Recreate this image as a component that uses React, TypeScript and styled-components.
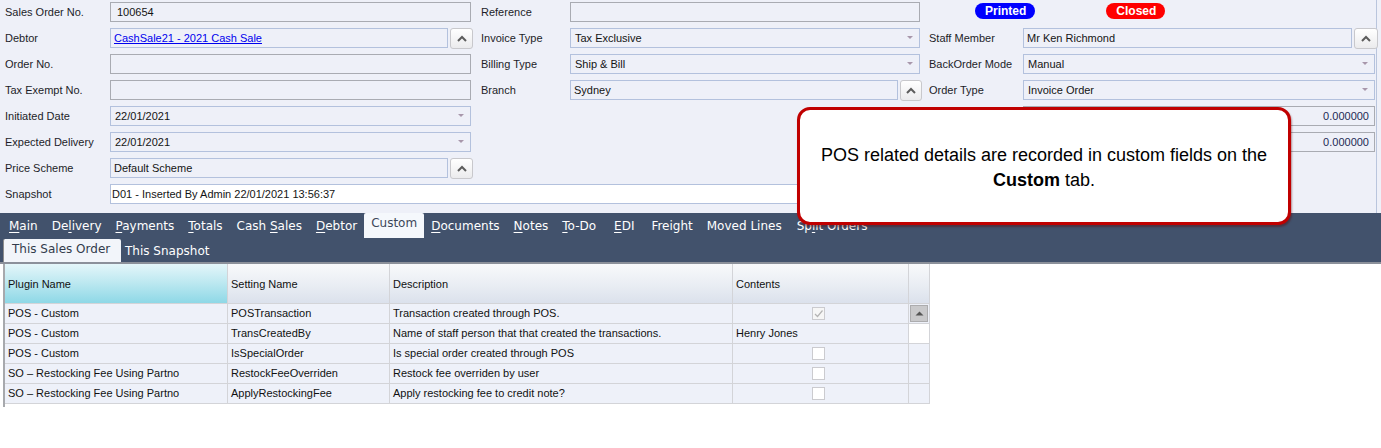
import * as React from "react";
import styled, { createGlobalStyle, css } from "styled-components";

type BoxKind = "plain" | "combo" | "lookup" | "link" | "white" | "number";

type TabDef = { pre: string; key?: string; post?: string; active?: boolean; extra?: number };

type GridRow = {
  plugin: string;
  setting: string;
  description: string;
  contents: { kind: "check"; checked: boolean } | { kind: "text"; value: string };
  scroll: "button" | "blank" | "plain";
};

const TABS: TabDef[] = [
  { pre: "", key: "M", post: "ain" },
  { pre: "De", key: "l", post: "ivery" },
  { pre: "", key: "P", post: "ayments" },
  { pre: "", key: "T", post: "otals" },
  { pre: "Cash ", key: "S", post: "ales" },
  { pre: "", key: "D", post: "ebtor" },
  { pre: "Custom", active: true },
  { pre: "", key: "D", post: "ocuments" },
  { pre: "", key: "N", post: "otes" },
  { pre: "", key: "T", post: "o-Do", extra: 4 },
  { pre: "", key: "E", post: "DI", extra: 3 },
  { pre: "Freight" },
  { pre: "Moved Lines", extra: 1 },
  { pre: "Sp", key: "l", post: "it Orders" },
];

const ROWS: GridRow[] = [
  {
    plugin: "POS - Custom",
    setting: "POSTransaction",
    description: "Transaction created through POS.",
    contents: { kind: "check", checked: true },
    scroll: "button",
  },
  {
    plugin: "POS - Custom",
    setting: "TransCreatedBy",
    description: "Name of staff person that that created the transactions.",
    contents: { kind: "text", value: "Henry Jones" },
    scroll: "blank",
  },
  {
    plugin: "POS - Custom",
    setting: "IsSpecialOrder",
    description: "Is special order created through POS",
    contents: { kind: "check", checked: false },
    scroll: "plain",
  },
  {
    plugin: "SO \u2013 Restocking Fee Using Partno",
    setting: "RestockFeeOverriden",
    description: "Restock fee overriden by user",
    contents: { kind: "check", checked: false },
    scroll: "plain",
  },
  {
    plugin: "SO \u2013 Restocking Fee Using Partno",
    setting: "ApplyRestockingFee",
    description: "Apply restocking fee to credit note?",
    contents: { kind: "check", checked: false },
    scroll: "plain",
  },
];

const UpButton: React.FC<{ $w?: number }> = ({ $w = 22 }) => (
  <LookupButton $w={$w}>
    <svg width="10" height="7" viewBox="0 0 10 7">
      <path d="M1 6 L5 2 L9 6" fill="none" stroke="#5c5c5c" strokeWidth="2" />
    </svg>
  </LookupButton>
);

const Field: React.FC<{
  label: string;
  labelWidth: number;
  kind: BoxKind;
  value?: string;
  mr?: number;
  width?: number;
  lookup?: number;
}> = ({ label, labelWidth, kind, value, mr, width, lookup }) => (
  <Row>
    <Label $w={labelWidth}>{label}</Label>
    <Box $kind={kind} $mr={lookup ? 0 : mr} $w={width}>
      {kind === "link" ? <LinkText>{value}</LinkText> : value}
      {kind === "combo" && <ComboArrow />}
    </Box>
    {lookup ? <UpButton $w={lookup} /> : null}
  </Row>
);

const App: React.FC = () => {
  return (
    <Page>
      <GlobalStyle />
      <FormPanel>
        <Columns>
          <Column $w={468} $ml={0}>
            <Field label="Sales Order No." labelWidth={105} kind="plain" value="100654" mr={2} />
            <Field label="Debtor" labelWidth={105} kind="link" value="CashSale21 - 2021 Cash Sale" lookup={23} />
            <Field label="Order No." labelWidth={105} kind="plain" mr={2} />
            <Field label="Tax Exempt No." labelWidth={105} kind="plain" mr={2} />
            <Field label="Initiated Date" labelWidth={105} kind="combo" value="22/01/2021" mr={2} />
            <Field label="Expected Delivery" labelWidth={105} kind="combo" value="22/01/2021" mr={2} />
            <Field label="Price Scheme" labelWidth={105} kind="lookup" value="Default Scheme" lookup={23} />
          </Column>
          <Column $w={441} $ml={8}>
            <Field label="Reference" labelWidth={89} kind="plain" mr={2} />
            <Field label="Invoice Type" labelWidth={89} kind="combo" value="Tax Exclusive" mr={2} />
            <Field label="Billing Type" labelWidth={89} kind="combo" value="Ship & Bill" mr={2} />
            <Field label="Branch" labelWidth={89} kind="lookup" value="Sydney" lookup={22} />
          </Column>
          <Column $w={449} $ml={7}>
            <BadgeRow>
              <Badge $color="#0000ff">Printed</Badge>
              <Badge $color="#ff0000">Closed</Badge>
            </BadgeRow>
            <Field label="Staff Member" labelWidth={94} kind="lookup" value="Mr Ken Richmond" lookup={24} />
            <Field label="BackOrder Mode" labelWidth={94} kind="combo" value="Manual" mr={3} />
            <Field label="Order Type" labelWidth={94} kind="combo" value="Invoice Order" mr={3} />
            <Field label="" labelWidth={94} kind="number" value="0.000000" mr={3} />
            <Field label="" labelWidth={94} kind="number" value="0.000000" mr={3} />
          </Column>
        </Columns>
        <Field label="Snapshot" labelWidth={105} kind="white" value="D01 - Inserted By Admin 22/01/2021 13:56:37" width={810} />
      </FormPanel>

      <TabBar>
        <TabRow>
          {TABS.map((tab, index) => (
            <Tab key={index} $active={tab.active} $extra={tab.extra ?? 0}>
              <span>
                {tab.pre}
                {tab.key && <u>{tab.key}</u>}
                {tab.post}
              </span>
            </Tab>
          ))}
        </TabRow>
        <SubTabRow>
          <SubTab $active>This Sales Order</SubTab>
          <SubTab>This Snapshot</SubTab>
        </SubTabRow>
      </TabBar>

      <Content>
        <GridFrame>
          <Table>
            <HeadCell $sorted>Plugin Name</HeadCell>
            <HeadCell>Setting Name</HeadCell>
            <HeadCell>Description</HeadCell>
            <HeadCell>Contents</HeadCell>
            <HeadCell />
            {ROWS.map((row, index) => (
              <React.Fragment key={index}>
                <Cell>{row.plugin}</Cell>
                <Cell>{row.setting}</Cell>
                <Cell>{row.description}</Cell>
                {row.contents.kind === "check" ? (
                  <Cell $center>
                    <CheckBox $checked={row.contents.checked}>
                      {row.contents.checked && (
                        <svg width="11" height="11" viewBox="0 0 11 11">
                          <path d="M2 6 L4.5 8.5 L9.5 2.5" fill="none" stroke="#b4b4b4" strokeWidth="1.2" />
                        </svg>
                      )}
                    </CheckBox>
                  </Cell>
                ) : (
                  <Cell>{row.contents.value}</Cell>
                )}
                <ScrollCell $kind={row.scroll}>
                  {row.scroll === "button" && (
                    <ScrollButton>
                      <svg width="9" height="5" viewBox="0 0 9 5">
                        <path d="M0.5 4.5 L4.5 0.5 L8.5 4.5 Z" fill="#555" />
                      </svg>
                    </ScrollButton>
                  )}
                </ScrollCell>
              </React.Fragment>
            ))}
          </Table>
        </GridFrame>
      </Content>

      <Callout>
        <div>
          POS related details are recorded in custom fields on the
          <br />
          <b>Custom</b> tab.
        </div>
      </Callout>
    </Page>
  );
};

export default App;

const GlobalStyle = createGlobalStyle`
  html, body {
    margin: 0;
    padding: 0;
    background: #ffffff;
  }
  body {
    font-family: "Liberation Sans", Arial, sans-serif;
    font-size: 11px;
    color: #1d1d28;
  }
  * {
    box-sizing: border-box;
  }
`;

const Page = styled.div`
  position: relative;
  width: 1381px;
  height: 448px;
  overflow: hidden;
  background: #ffffff;
`;

const FormPanel = styled.div`
  position: relative;
  height: 213px;
  padding-left: 5px;
  background: #eef0f8;

  &::after {
    content: "";
    position: absolute;
    top: 0;
    bottom: 0;
    left: 1376px;
    width: 1px;
    background: #b9c5dd;
  }
`;

const Columns = styled.div`
  display: flex;
  align-items: flex-start;
  height: 182px;
`;

const Column = styled.div<{ $w: number; $ml: number }>`
  display: flex;
  flex-direction: column;
  width: ${(p) => p.$w}px;
  margin-left: ${(p) => p.$ml}px;
  position: relative;
  z-index: 1;
`;

const Row = styled.div`
  display: flex;
  align-items: flex-start;
  height: 26px;
  padding-top: 2px;
`;

const Label = styled.div<{ $w: number }>`
  flex: 0 0 ${(p) => p.$w}px;
  line-height: 20px;
  white-space: nowrap;
  color: #1d1d28;
`;

const boxPadding: Record<BoxKind, string> = {
  plain: "0 4px 0 6px",
  combo: "0 16px 0 4px",
  lookup: "0 4px 0 3px",
  link: "0 4px 0 3px",
  white: "0 4px 0 1px",
  number: "0 5px 0 4px",
};

const Box = styled.div<{ $kind: BoxKind; $mr?: number; $w?: number }>`
  position: relative;
  flex: ${(p) => (p.$w ? `0 0 ${p.$w}px` : "1 1 auto")};
  height: 20px;
  margin-right: ${(p) => p.$mr ?? 0}px;
  padding: ${(p) => boxPadding[p.$kind]};
  border: 1px solid
    ${(p) => (p.$kind === "plain" || p.$kind === "number" ? "#a9abb2" : "#b3c1dd")};
  background: ${(p) => (p.$kind === "white" ? "#ffffff" : "transparent")};
  line-height: 18px;
  white-space: nowrap;
  overflow: hidden;
  color: ${(p) => (p.$kind === "number" ? "#1d2a55" : "#141414")};
  text-align: ${(p) => (p.$kind === "number" ? "right" : "left")};
`;

const LinkText = styled.span`
  color: #0000ee;
  text-decoration: underline;
`;

const ComboArrow = styled.span`
  position: absolute;
  right: 6px;
  top: 7px;
  width: 0;
  height: 0;
  border-left: 3px solid transparent;
  border-right: 3px solid transparent;
  border-top: 3px solid #a897ab;
`;

const LookupButton = styled.div<{ $w: number }>`
  flex: 0 0 ${(p) => p.$w}px;
  height: 21px;
  margin-left: 2px;
  display: flex;
  align-items: center;
  justify-content: center;
  border: 1px solid #c8c8cc;
  border-radius: 3px;
  background: linear-gradient(#ffffff, #ebebed);
`;

const BadgeRow = styled.div`
  display: flex;
  height: 26px;
  padding: 3px 0 0 46px;
  gap: 71px;
`;

const Badge = styled.div<{ $color: string }>`
  height: 16px;
  padding: 0 9px 0 10px;
  border-radius: 8px;
  background: ${(p) => p.$color};
  color: #ffffff;
  font-weight: bold;
  font-size: 12px;
  line-height: 16px;
`;

const TabBar = styled.div`
  height: 51px;
  background: #42526c;
  border-bottom: 2px solid #8b909a;
  font-family: "DejaVu Sans", Verdana, sans-serif;
  font-size: 12px;
  color: #ffffff;
`;

const TabRow = styled.div`
  display: flex;
  height: 25px;
  padding-left: 2px;
`;

const Tab = styled.div<{ $active?: boolean; $extra: number }>`
  display: flex;
  align-items: center;
  padding: 1px ${(p) => 7 + p.$extra}px 0 7px;
  white-space: pre;

  u {
    text-underline-offset: 2px;
  }

  ${(p) =>
    p.$active &&
    css`
      align-items: flex-start;
      padding-top: 3px;
      background: #f5f8fc;
      color: #3d4759;
      border-radius: 2px 2px 0 0;
    `}
`;

const SubTabRow = styled.div`
  display: flex;
  height: 24px;
  padding-left: 3px;
`;

const SubTab = styled.div<{ $active?: boolean }>`
  display: flex;
  align-items: center;
  padding: 2px 4px 0 4px;
  white-space: nowrap;

  ${(p) =>
    p.$active &&
    css`
      align-items: flex-start;
      width: 118px;
      padding: 3px 0 0 8px;
      margin-top: 1px;
      background: #f2f5fa;
      color: #333c4c;
      border-left: 1px solid #8d8d8d;
      border-radius: 2px 2px 0 0;
    `}
`;

const Content = styled.div`
  padding-left: 3px;
  background: #ffffff;
`;

const GridFrame = styled.div`
  width: 927px;
  height: 143px;
  border-left: 2px solid #a7a9ad;
`;

const Table = styled.div`
  display: grid;
  grid-template-columns: 223px 162px 343px 176px 21px;
  grid-template-rows: 40px;
  grid-auto-rows: 20px;
  width: 925px;
  font-size: 11px;
  color: #111111;
`;

const HeadCell = styled.div<{ $sorted?: boolean }>`
  display: flex;
  align-items: center;
  padding: 1px 3px 0 3px;
  border-right: 1px solid #d3d4d8;
  border-bottom: 1px solid #d3d4d8;
  background: ${(p) =>
    p.$sorted
      ? "linear-gradient(#e4f6fa, #bfe9f1 45%, #8ed8e6)"
      : "linear-gradient(#f8f9fb, #e9edf3 55%, #dbe1ec)"};
  white-space: nowrap;
`;

const Cell = styled.div<{ $center?: boolean }>`
  display: flex;
  align-items: center;
  justify-content: ${(p) => (p.$center ? "center" : "flex-start")};
  padding: 0 3px 2px 3px;
  border-right: 1px solid #d3d4d8;
  border-bottom: 1px solid #d3d4d8;
  background: #eef1f9;
  white-space: nowrap;
  overflow: hidden;
`;

const CheckBox = styled.span<{ $checked?: boolean }>`
  display: flex;
  align-items: center;
  justify-content: center;
  width: 13px;
  height: 13px;
  margin: 2px 0 0 -4px;
  border: 1px solid #cbcbcf;
  background: ${(p) => (p.$checked ? "#f6f6f6" : "#ffffff")};
`;

const ScrollCell = styled.div<{ $kind: "button" | "blank" | "plain" }>`
  display: flex;
  align-items: stretch;
  padding: 1px;
  border-right: 1px solid #d3d4d8;
  border-bottom: 1px solid #d3d4d8;
  background: ${(p) => (p.$kind === "blank" ? "#ffffff" : "#eef1f9")};
`;

const ScrollButton = styled.div`
  flex: 1;
  display: flex;
  align-items: center;
  justify-content: center;
  background: #c9c9cb;
  border: 1px solid #acacae;
`;

const Callout = styled.div`
  position: absolute;
  left: 797px;
  top: 107px;
  width: 494px;
  height: 118px;
  display: flex;
  align-items: center;
  justify-content: center;
  padding-top: 4px;
  border: 3px solid #c00000;
  border-radius: 13px;
  background: #ffffff;
  box-shadow: 1px 2px 2px rgba(90, 0, 0, 0.4);
  text-align: center;
  font-family: "Liberation Sans", Arial, sans-serif;
  font-size: 18px;
  line-height: 25px;
  color: #000000;
  z-index: 5;
`;
